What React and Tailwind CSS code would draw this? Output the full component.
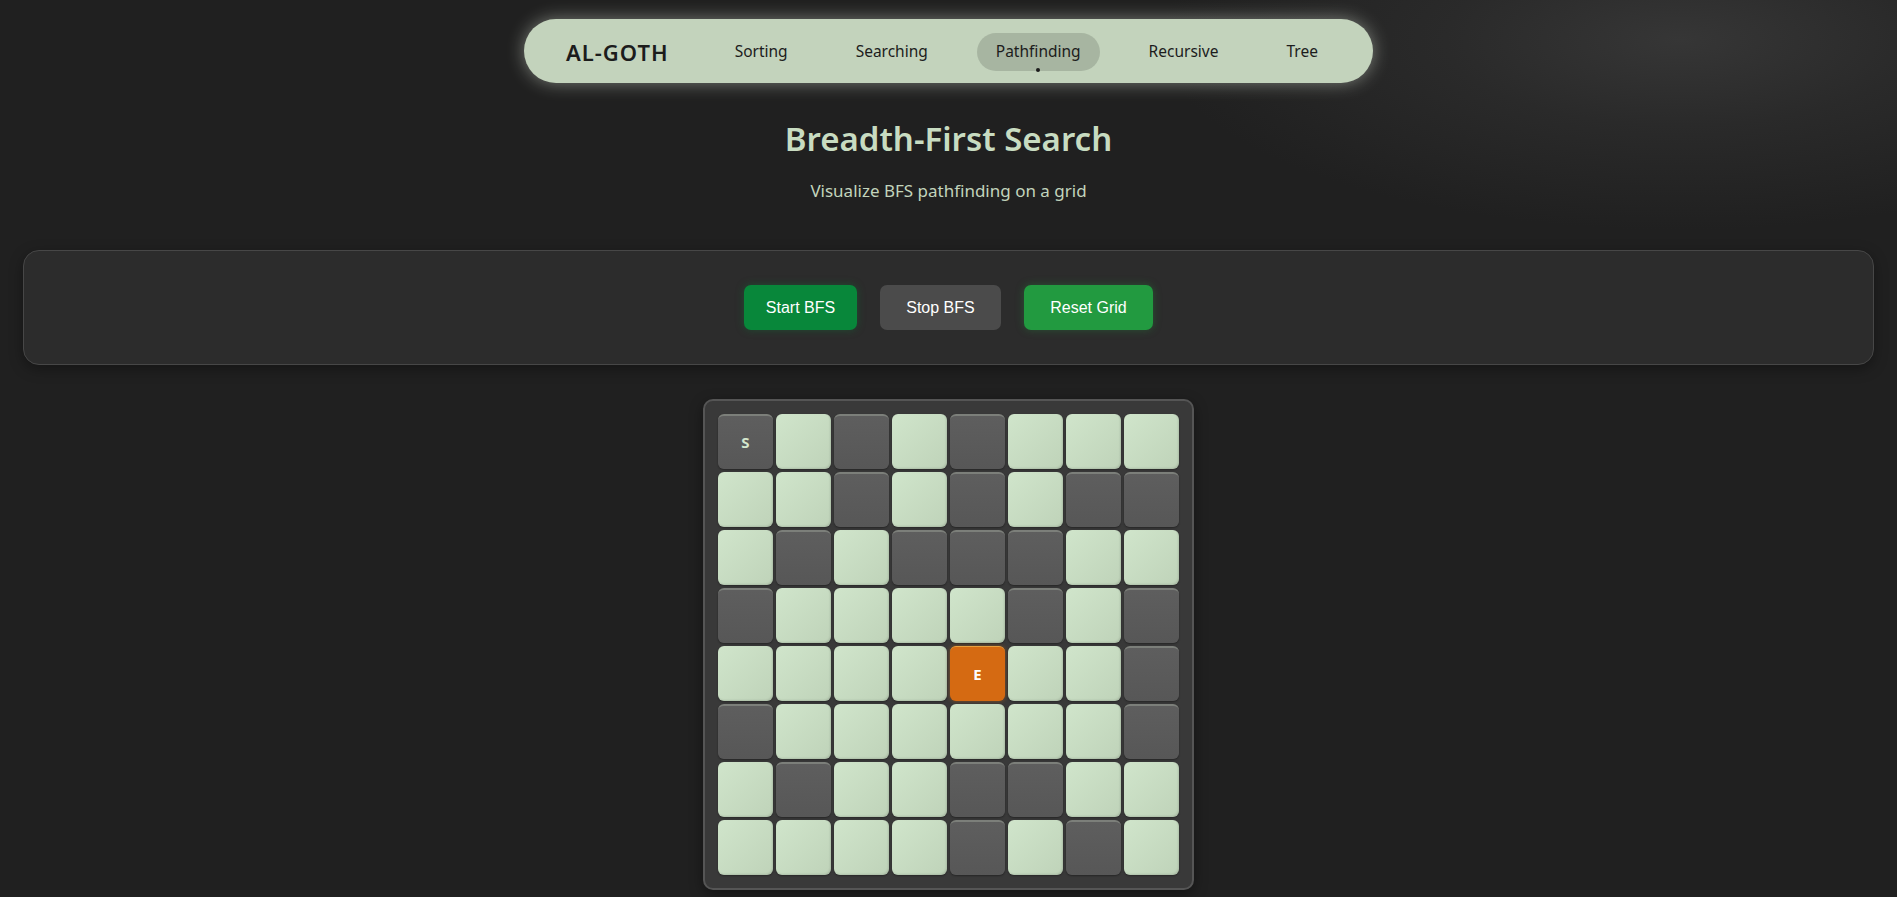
import React from "react";

const GRID = [
  "SLDLDLLL",
  "LLDLDLDD",
  "LDLDDDLL",
  "DLLLLDLD",
  "LLLLELLD",
  "DLLLLLLD",
  "LDLLDDLL",
  "LLLLDLDL",
];

const NAV = ["Sorting", "Searching", "Pathfinding", "Recursive", "Tree"];

const Cell = ({ type }) => {
  if (type === "E") {
    return (
      <div className="w-[55px] h-[55px] rounded-[6px] bg-[#d56a12] border-t border-[#e8a040] flex items-center justify-center text-white font-bold text-[15px] shadow-[0_0_4px_rgba(213,106,18,0.5)]">
        E
      </div>
    );
  }
  if (type === "S" || type === "D") {
    return (
      <div className="w-[55px] h-[55px] rounded-[6px] bg-gradient-to-b from-[#5e5e5e] to-[#575757] border-t-[2px] border-[#7c7f7a] flex items-center justify-center text-[#d4e6cc] font-bold text-[15px] shadow-[0_1px_2px_rgba(0,0,0,0.35)]">
        {type === "S" ? "S" : ""}
      </div>
    );
  }
  return (
    <div className="w-[55px] h-[55px] rounded-[6px] bg-gradient-to-br from-[#d0e5cb] to-[#bfd3b9] shadow-[inset_-1px_-1px_2px_rgba(0,0,0,0.12),0_1px_2px_rgba(0,0,0,0.3)]" />
  );
};

const App = () => {
  return (
    <div
      className="min-h-[897px] w-full bg-[#202020] bg-[radial-gradient(ellipse_520px_190px_at_1680px_40px,#363636_0%,#2a2a2a_45%,#202020_100%)] flex flex-col items-center overflow-hidden"
      style={{ fontFamily: '"Noto Sans", "Open Sans", sans-serif' }}
    >
      <nav className="mt-[19px] w-[849px] h-[64px] rounded-full bg-[#c3d3bc] shadow-[0_0_18px_rgba(230,240,225,0.45)] flex items-center pl-[42px] pt-[2px] gap-[30px]">
        <span className="text-[22px] font-semibold tracking-[1px] text-[#1c1c1c] mr-[17px]">
          AL-GOTH
        </span>
        {NAV.map((item) => (
          <div key={item} className="relative">
            <div
              className={`px-[19px] h-[38px] flex items-center rounded-full text-[15.5px] text-[#1c1c1c] ${
                item === "Pathfinding" ? "bg-[#a7b5a1]" : ""
              }`}
            >
              {item}
            </div>
            {item === "Pathfinding" && (
              <div className="absolute left-1/2 -translate-x-1/2 bottom-[-1px] w-[4px] h-[4px] rounded-full bg-[#1c1c1c]" />
            )}
          </div>
        ))}
      </nav>

      <h1 className="mt-[34px] text-[33px] font-semibold text-[#c8dcc1] leading-[44px]">
        Breadth-First Search
      </h1>
      <p className="mt-[19px] text-[17px] text-[#c2d4bc] leading-[22px]">
        Visualize BFS pathfinding on a grid
      </p>

      <div className="mt-[48px] w-[calc(100%-46px)] h-[115px] rounded-[16px] bg-[#2c2c2c] border border-[#474747] shadow-[0_4px_14px_rgba(0,0,0,0.35)] flex items-center justify-center gap-[23px]"
        style={{ fontFamily: '"Liberation Sans", Arial, sans-serif' }}
      >
        <button className="w-[113px] h-[45px] rounded-[7px] bg-[#08873a] text-white text-[16px] shadow-[0_0_8px_rgba(8,135,58,0.35)]">
          Start BFS
        </button>
        <button className="w-[121px] h-[45px] rounded-[7px] bg-[#4b4b4b] text-white text-[16px]">
          Stop BFS
        </button>
        <button className="w-[129px] h-[45px] rounded-[7px] bg-[#229a40] text-white text-[16px] shadow-[0_0_8px_rgba(34,154,64,0.35)]">
          Reset Grid
        </button>
      </div>

      <div className="mt-[34px] rounded-[10px] bg-[#393939] border-2 border-[#555555] p-[13px] shadow-[0_4px_14px_rgba(0,0,0,0.4)]">
        <div className="grid grid-cols-8 gap-[3px]">
          {GRID.map((row, r) =>
            row.split("").map((c, i) => <Cell key={`${r}-${i}`} type={c} />)
          )}
        </div>
      </div>
    </div>
  );
};

export default App;
